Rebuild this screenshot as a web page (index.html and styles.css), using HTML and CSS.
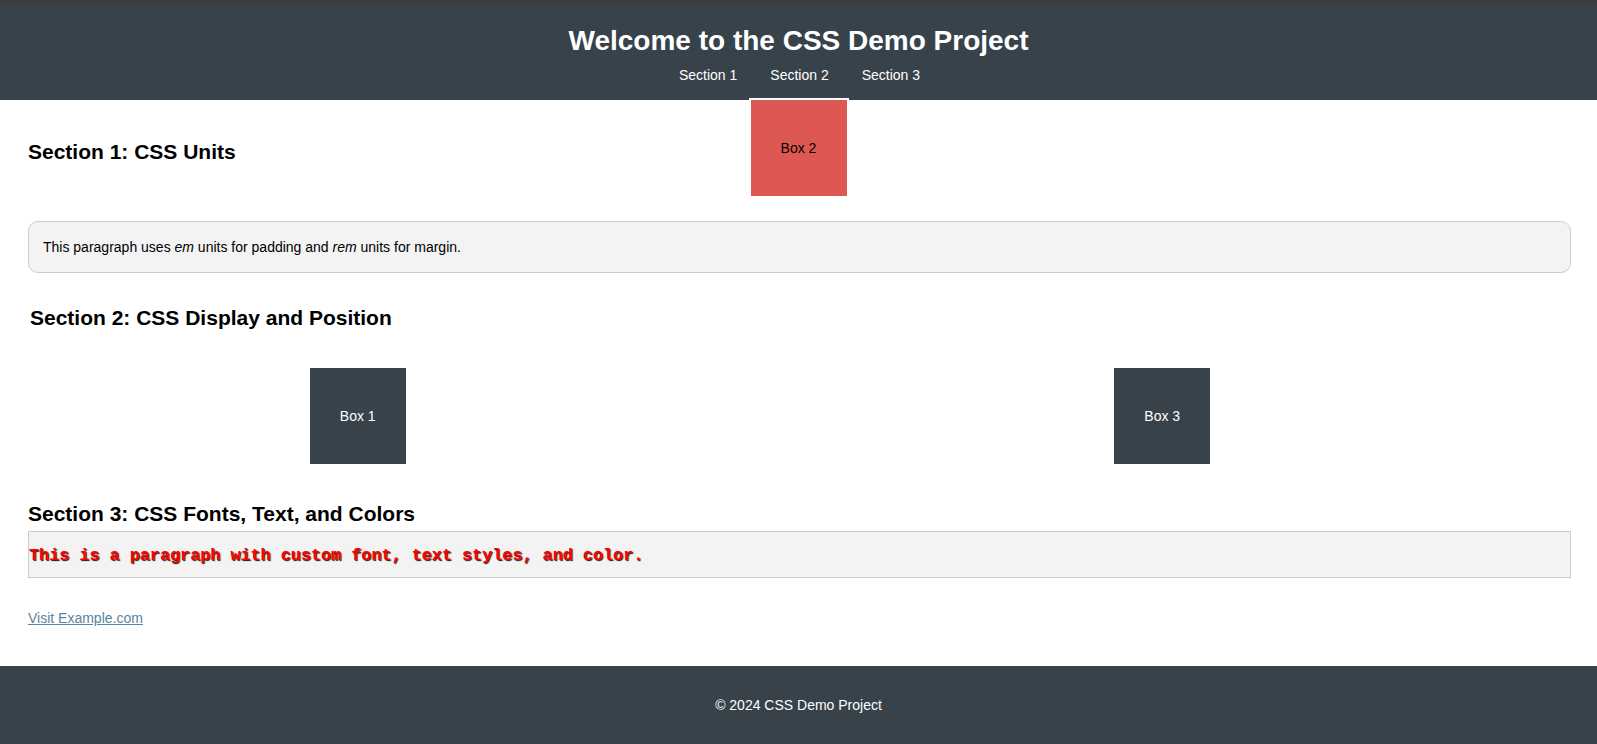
FILE: index.html
```html
<!DOCTYPE html>
<html lang="en">
<head>
<meta charset="utf-8">
<title>CSS Demo Project</title>
<link rel="stylesheet" href="styles.css">
</head>
<body>
<header class="site-header">
  <h1 class="site-title">Welcome to the CSS Demo Project</h1>
  <nav class="site-nav">
    <a class="nav-link" href="#section1">Section 1</a>
    <a class="nav-link" href="#section2">Section 2</a>
    <a class="nav-link" href="#section3">Section 3</a>
  </nav>
</header>
<main class="content">
  <section class="section section-units" id="section1">
    <h2 class="section-title">Section 1: CSS Units</h2>
    <p class="units-para">This paragraph uses <em>em</em> units for padding and <em>rem</em> units for margin.</p>
  </section>
  <section class="section section-position" id="section2">
    <h2 class="section-title">Section 2: CSS Display and Position</h2>
    <div class="box-row">
      <div class="box box-one">Box 1</div>
      <div class="box box-two">Box 2</div>
      <div class="box box-three">Box 3</div>
    </div>
  </section>
  <section class="section section-fonts" id="section3">
    <h2 class="section-title">Section 3: CSS Fonts, Text, and Colors</h2>
    <p class="styled-para">This is a paragraph with custom font, text styles, and color.</p>
    <p class="link-row"><a class="demo-link" href="#">Visit Example.com</a></p>
  </section>
</main>
<footer class="site-footer">
  <p class="footer-text">&copy; 2024 CSS Demo Project</p>
</footer>
</body>
</html>
```
FILE: styles.css
```css
html, body {
  margin: 0;
  padding: 0;
}

body {
  font-family: "Liberation Sans", Arial, sans-serif;
  font-size: 14px;
  color: #000;
  background: #fff;
}

.site-header {
  background: #37424a;
  border-top: 5px solid #3c3c3c;
  padding: 21px 0 17px;
  text-align: center;
  color: #fff;
}

.site-title {
  margin: 0;
  font-size: 28px;
  line-height: 30px;
  font-weight: bold;
}

.site-nav {
  margin-top: 11px;
  display: flex;
  justify-content: center;
  gap: 33px;
  line-height: 16px;
  padding-left: 2px;
}

.nav-link {
  color: #fff;
  text-decoration: none;
  font-size: 14px;
}

.content {
  padding: 40px 26px 40px 28px;
}

.section-title {
  margin: 0;
  font-size: 21px;
  line-height: 24px;
  font-weight: bold;
}

.section-position .section-title {
  padding-left: 2px;
}

.units-para {
  margin: 57px 0 0;
  padding: 16px 14px;
  line-height: 18px;
  background: #f3f3f3;
  border: 1px solid #ccc;
  border-radius: 10px;
}

.section-position {
  margin-top: 33px;
}

.box-row {
  margin-top: 36px;
  display: flex;
  justify-content: space-evenly;
}

.box {
  box-sizing: border-box;
  width: 100px;
  height: 100px;
  border: 2px solid #fff;
  background: #37424a;
  color: #fff;
  display: flex;
  align-items: center;
  justify-content: center;
  position: relative;
}

.box-one {
  left: -31px;
}

.box-two {
  background: #dd5853;
  color: #000;
  top: -268px;
  left: -1px;
}

.box-three {
  left: -48px;
}

.section-fonts {
  margin-top: 36px;
}

.styled-para {
  margin: 5px 0 0;
  padding: 14px 0 12px;
  background: #f3f3f3;
  border: 1px solid #ccc;
  font-family: "Liberation Mono", "Courier New", monospace;
  font-size: 16.8px;
  line-height: 19px;
  font-weight: bold;
  color: #ff0000;
  text-shadow: 1px 1px 1px #111;
}

.link-row {
  margin: 32px 0 0;
  line-height: 16px;
}

.demo-link {
  color: #5b84a0;
}

.site-footer {
  background: #37424a;
  color: #fff;
  text-align: center;
  padding: 31px 0 34px;
}

.footer-text {
  margin: 0;
  line-height: 16px;
}
```
